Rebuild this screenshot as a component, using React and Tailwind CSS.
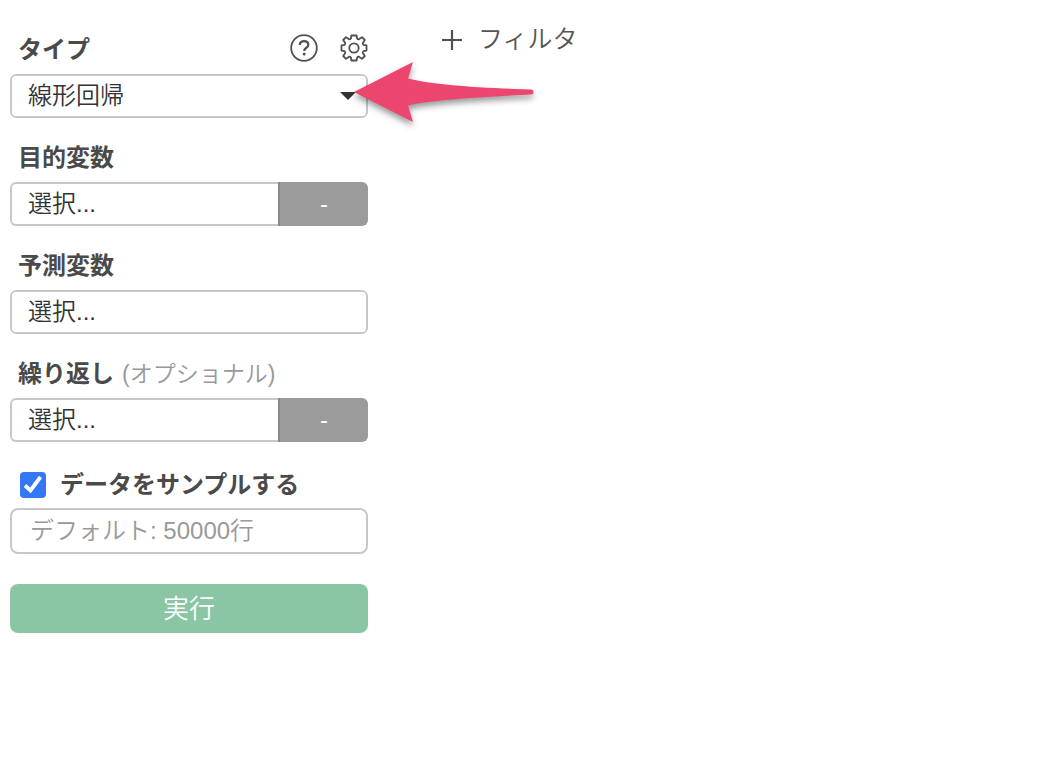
const FONT = "font-['Liberation_Sans','Noto_Sans_CJK_JP',sans-serif]"

function Label({ htmlFor, note, children }) {
  return (
    <div className="mb-1 flex h-10 items-center gap-2 pl-2">
      <label htmlFor={htmlFor} className="text-2xl font-bold text-[#4a4a4a]">{children}</label>
      {note && <span className="text-[23px] font-[350] text-[#999]">{note}</span>}
    </div>
  )
}

function ColumnField({ id, label, note, withFunction }) {
  return (
    <div className="mt-5">
      <Label htmlFor={id} note={note}>{label}</Label>
      <div className="flex h-11">
        <select
          id={id}
          className={`min-w-0 flex-1 appearance-none border-2 border-[#c8c8c8] bg-white px-4 text-2xl font-[350] text-[#333] ${withFunction ? 'rounded-l-md border-r-0' : 'rounded-md'}`}
        >
          <option>選択...</option>
        </select>
        {withFunction && (
          <button type="button" className="w-[90px] rounded-r-md border-l-2 border-[#8b8b8b] bg-[#9b9b9b] text-2xl text-white">-</button>
        )}
      </div>
    </div>
  )
}

function HelpIcon() {
  return (
    <svg width="28" height="28" viewBox="0 0 28 28" fill="none" stroke="#4f4f4f">
      <circle cx="14" cy="14" r="12.800" strokeWidth="1.800" />
      <path d="M9.800 11c0-2.500 1.800-3.900 4.200-3.900s4.300 1.400 4.300 3.600c0 1.700-1 2.500-2.200 3.300-1.300.9-1.900 1.500-1.900 3" strokeWidth="2.200" />
      <circle cx="14.200" cy="20" r="1.500" fill="#4f4f4f" stroke="none" />
    </svg>
  )
}

function GearIcon() {
  return (
    <svg width="28" height="28" viewBox="-14 -14 28 28" fill="none" stroke="#4f4f4f" strokeWidth="1.800" strokeLinejoin="round">
      <path d="M-2.600-12.500H2.600L3.100-9.500Q4-8.300 5.200-8.900L8-10.800 10.800-8 8.900-5.200Q8.300-4 9.500-3.100L12.500-2.600V2.600L9.500 3.100Q8.300 4 8.900 5.200L10.800 8 8 10.800 5.200 8.900Q4 8.300 3.100 9.500L2.600 12.500H-2.600L-3.100 9.500Q-4 8.300-5.200 8.900L-8 10.800-10.800 8-8.900 5.200Q-8.300 4-9.500 3.100L-12.500 2.600V-2.600L-9.500-3.100Q-8.300-4-8.900-5.200L-10.800-8-8-10.800-5.200-8.900Q-4-8.300-3.100-9.500Z" />
      <circle r="4.700" />
    </svg>
  )
}

function PointerArrow() {
  return (
    <svg
      className="pointer-events-none absolute left-[342px] top-[62px] drop-shadow-[0_4px_3px_rgba(0,0,0,0.4)]"
      width="184"
      height="64"
      viewBox="0 0 184 64"
      aria-hidden="true"
    >
      <path
        d="M2 30 61 0 56 16.500C80 23 130 26 179 27.500A2.500 2.500 0 0 1 179 32.500C130 35 80 38 56 43.500L61 60Z"
        fill="#ec466f"
      />
    </svg>
  )
}

export default function App() {
  return (
    <div className={`flex min-h-screen items-start bg-white ${FONT}`}>
      <form className="relative ml-2.5 w-[358px] shrink-0 pt-[30px]">
        <div className="flex items-start justify-between">
          <Label htmlFor="type">タイプ</Label>
          <div className="flex h-9 items-center gap-[22px]">
            <button type="button" aria-label="ヘルプ"><HelpIcon /></button>
            <button type="button" aria-label="設定"><GearIcon /></button>
          </div>
        </div>
        <div className="relative h-11">
          <select
            id="type"
            className="h-full w-full appearance-none rounded-md border-2 border-[#c8c8c8] bg-white px-4 text-2xl font-[350] text-[#333]"
          >
            <option>線形回帰</option>
          </select>
          <svg className="pointer-events-none absolute right-3 top-[18px]" width="16" height="8" viewBox="0 0 16 8">
            <path d="M0 0h16L8 8z" fill="#333" />
          </svg>
        </div>

        <ColumnField id="target" label="目的変数" withFunction />
        <ColumnField id="predictor" label="予測変数" />
        <ColumnField id="repeat" label="繰り返し" note="(オプショナル)" withFunction />

        <div className="mb-1 mt-6 flex h-[38px] items-center gap-3.5 pl-2.5">
          <span className="relative h-[26px] w-[26px]">
            <input
              id="sample"
              type="checkbox"
              defaultChecked
              className="peer block h-full w-full appearance-none rounded-sm bg-[#bbb] checked:bg-[#3478f6]"
            />
            <svg
              className="pointer-events-none absolute inset-0 hidden peer-checked:block"
              width="26"
              height="26"
              viewBox="0 0 26 26"
            >
              <path d="M5 13.500 10.500 18.500 20.500 5" fill="none" stroke="#fff" strokeWidth="3.800" />
            </svg>
          </span>
          <label htmlFor="sample" className="text-2xl font-bold text-[#4a4a4a]">データをサンプルする</label>
        </div>
        <input
          aria-label="サンプル行数"
          placeholder="デフォルト: 50000行"
          className="block h-[46px] w-full rounded-lg border-2 border-[#c8c8c8] px-[18px] text-2xl font-[350] placeholder:text-[#999]"
        />

        <button
          type="button"
          className="mt-[30px] block h-[49px] w-full rounded-lg bg-[#8bc6a4] text-[26px] font-[350] leading-8 text-white"
        >
          実行
        </button>

        <PointerArrow />
      </form>

      <button type="button" className="ml-[74px] mt-5 flex h-10 items-center gap-4 text-[25px] font-[350] text-[#555]">
        <svg width="20" height="20" viewBox="0 0 20 20" stroke="#4f4f4f" strokeWidth="2.200">
          <path d="M0 10h20M10 0v20" />
        </svg>
        フィルタ
      </button>
    </div>
  )
}
